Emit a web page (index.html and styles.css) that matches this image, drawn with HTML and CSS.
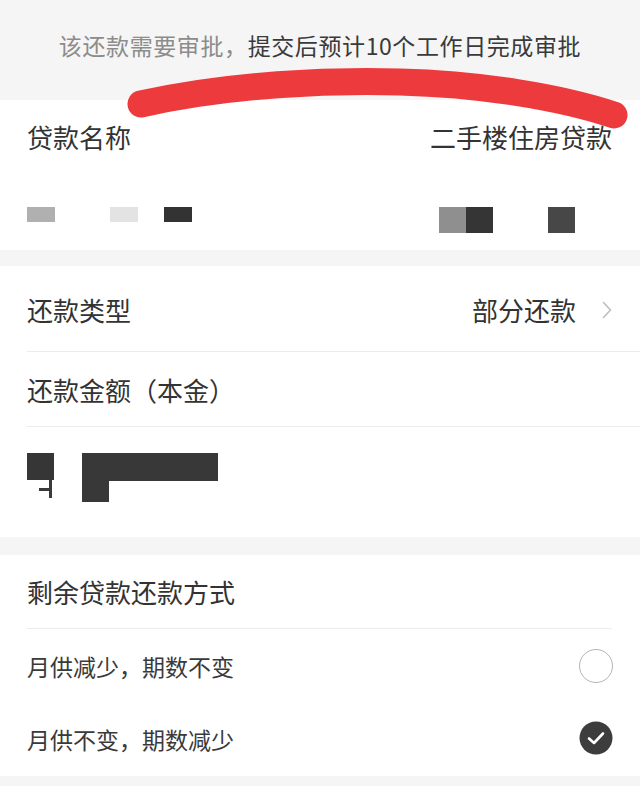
FILE: index.html
```html
<!DOCTYPE html>
<html lang="zh-CN">
<head>
<meta charset="utf-8">
<title>还款</title>
<link rel="stylesheet" href="styles.css">
</head>
<body>
<div class="page">
  <div class="notice"><span class="muted">该还款需要审批，</span><span class="strong">提交后预计10个工作日完成审批</span></div>

  <section class="card">
    <div class="row row-name">
      <span class="label">贷款名称</span>
      <span class="value">二手楼住房贷款</span>
    </div>
    <div class="row row-mask">
      <div class="mask-left">
        <i class="blk b-gray"></i>
        <i class="blk b-light"></i>
        <i class="blk b-dark"></i>
      </div>
      <div class="mask-right">
        <i class="blk b-mid tall"></i><i class="blk b-dark tall"></i>
        <i class="blk b-dark2 tall gap"></i>
      </div>
    </div>
  </section>

  <section class="card card-2">
    <div class="row row-type">
      <span class="label">还款类型</span>
      <span class="value-link">部分还款<span class="chev"><svg width="10" height="18" viewBox="0 0 10 18"><path d="M1.5 1.5 L8.5 9 L1.5 16.5" fill="none" stroke="#bdbdbd" stroke-width="1.6" stroke-linecap="round" stroke-linejoin="round"/></svg></span></span>
    </div>
    <div class="divider"></div>
    <div class="row row-amount">
      <span class="label">还款金额（本金）</span>
    </div>
    <div class="divider"></div>
    <div class="amount-mask">
      <div class="am-a">
        <i class="am-sq"></i>
        <i class="am-f"><i class="am-fbar"></i></i>
      </div>
      <div class="am-l">
        <i class="am-bar"></i>
        <i class="am-leg"></i>
      </div>
    </div>
  </section>

  <section class="card card-3">
    <div class="row row-title">
      <span class="label">剩余贷款还款方式</span>
    </div>
    <div class="divider short"></div>
    <div class="row row-opt">
      <span class="opt">月供减少，期数不变</span>
      <span class="radio"></span>
    </div>
    <div class="row row-opt">
      <span class="opt">月供不变，期数减少</span>
      <span class="radio checked"><svg width="34" height="34" viewBox="0 0 34 34"><circle cx="17" cy="17" r="16.5" fill="#3d3d3d"/><path d="M10 17.5 L15 22 L24 12.5" fill="none" stroke="#fff" stroke-width="2.6" stroke-linecap="round" stroke-linejoin="round"/></svg></span>
    </div>
  </section>

  <svg class="scribble" width="640" height="140" viewBox="0 0 640 140">
    <path d="M141 104 C 230 84 330 80 400 82 C 480 84 560 97 614 115" fill="none" stroke="#ec3a3d" stroke-width="27" stroke-linecap="round"/>
  </svg>
</div>
</body>
</html>
```

FILE: styles.css
```css
* { box-sizing: border-box; }
html, body { margin: 0; padding: 0; }
body {
  background: #f5f5f5;
  font-family: "Noto Sans CJK SC", "Noto Sans", sans-serif;
  color: #333;
}
.page {
  position: relative;
  width: 640px;
  height: 786px;
  overflow: hidden;
  background: #f5f5f5;
}
.notice {
  height: 100px;
  display: flex;
  justify-content: center;
  align-items: center;
  padding-bottom: 10px;
  font-size: 23px;
  line-height: 1;
  letter-spacing: 0.6px;
}
.notice .muted { color: #8c8c8c; }
.notice .strong { color: #3a3a3a; }

.card { background: #fff; }
.card-2 { margin-top: 16px; }
.card-3 { margin-top: 18px; }

.row {
  display: flex;
  align-items: center;
  justify-content: space-between;
  padding: 0 27px;
  line-height: 1;
}
.label { font-size: 26px; color: #333; }
.value { font-size: 26px; color: #333; padding-right: 1px; }

.row-name { height: 74px; }
.row-mask { height: 76px; align-items: flex-start; padding-top: 33px; padding-right: 65px; }
.mask-left { display: flex; gap: 0; }
.mask-left .blk { display: block; width: 28px; height: 15px; }
.mask-left .b-gray { background: #b0b0b0; }
.mask-left .b-light { background: #e3e3e3; margin-left: 55px; }
.mask-left .b-dark { background: #333; margin-left: 26px; }
.mask-right { display: flex; margin-left: auto; }
.mask-right .blk { display: block; width: 27px; height: 26px; }
.mask-right .b-mid { background: #8f8f8f; }
.mask-right .b-dark { background: #353535; }
.mask-right .b-dark2 { background: #474747; margin-left: 55px; }

.row-type { height: 85px; padding-top: 2px; padding-right: 28px; }
.value-link { display: flex; align-items: center; font-size: 26px; color: #333; }
.chev { display: flex; margin-left: 26px; }
.row-amount { height: 74px; padding-top: 2px; }

.divider { height: 1px; background: #ececec; margin-left: 27px; }
.divider.short { margin-right: 28px; }

.amount-mask {
  height: 110px;
  display: flex;
  align-items: flex-start;
  padding: 26px 27px 0;
}
.am-a { width: 27px; height: 46px; }
.am-sq { display: block; width: 27px; height: 27px; background: #363636; }
.am-f { display: flex; align-items: center; justify-content: flex-end; width: 25px; height: 18px; border-right: 3px solid #3a3a3a; }
.am-fbar { display: block; width: 10px; height: 3px; background: #3a3a3a; }
.am-l { margin-left: 28px; width: 136px; }
.am-bar { display: block; width: 136px; height: 28px; background: #383838; }
.am-leg { display: block; width: 27px; height: 21px; background: #383838; }

.row-title { height: 73px; }
.row-opt { height: 74px; padding-right: 27px; }
.row-opt + .row-opt { height: 73px; }
.opt { font-size: 23px; color: #3a3a3a; }
.radio {
  width: 34px;
  height: 34px;
  border-radius: 50%;
  border: 1.5px solid #b5b5b5;
  display: flex;
}
.radio.checked { border: none; margin-top: -4px; }

.scribble {
  position: absolute;
  left: 0;
  top: 0;
  pointer-events: none;
}
```
